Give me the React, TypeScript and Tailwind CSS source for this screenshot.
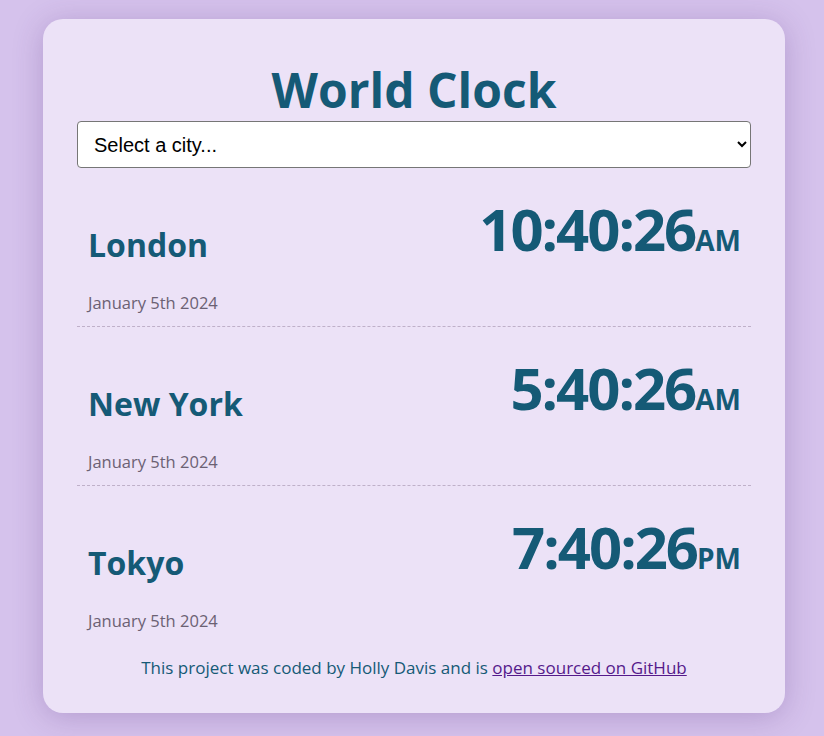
import React from "react";

const cities = [
  { name: "London", date: "January 5th 2024", time: "10:40:26", period: "AM" },
  { name: "New York", date: "January 5th 2024", time: "5:40:26", period: "AM" },
  { name: "Tokyo", date: "January 5th 2024", time: "7:40:26", period: "PM" },
];

const App = () => {
  return (
    <div className="min-h-[736px] bg-[#d5c2ec] pt-[19px] font-['Open_Sans',sans-serif]">
      <div className="ml-[43px] w-[742px] rounded-[20px] bg-[#ece2f7] px-[34px] pb-[33px] pt-[40px] shadow-[0_4px_30px_rgba(80,40,120,0.25)]">
        <h1 className="text-center text-[48px] font-bold leading-[62px] text-[#155a76]">
          World Clock
        </h1>
        <select className="h-[47px] w-full rounded-[4px] border border-[#767676] bg-white px-[12px] font-['Liberation_Sans',sans-serif] text-[20px] text-black">
          <option>Select a city...</option>
        </select>

        <div>
          {cities.map((city, i) => (
            <div
              key={city.name}
              className={`flex items-start justify-between pb-[11px] pl-[11px] pr-[10px] pt-[32px] ${
                i < cities.length - 1 ? "border-b border-dashed border-[#bfb0c9]" : ""
              }`}
            >
              <div>
                <h2 className="mt-[25px] text-[32px] font-bold leading-[40px] text-[#155a76]">
                  {city.name}
                </h2>
                <div className="mt-[26px] text-[16.5px] leading-[24px] text-[#6b6173]">
                  {city.date}
                </div>
              </div>
              <div className="text-[58px] font-bold leading-[58px] text-[#155a76]">
                <span className="tracking-[-2px]">{city.time}</span>
                <small className="text-[28px]">{city.period}</small>
              </div>
            </div>
          ))}
        </div>

        <footer className="mt-[12px] text-center text-[17px] leading-[24px] text-[#155a76]">
          This project was coded by Holly Davis and is{" "}
          <a href="#" className="text-[#551a8b] underline">
            open sourced on GitHub
          </a>
        </footer>
      </div>
    </div>
  );
};

export default App;
